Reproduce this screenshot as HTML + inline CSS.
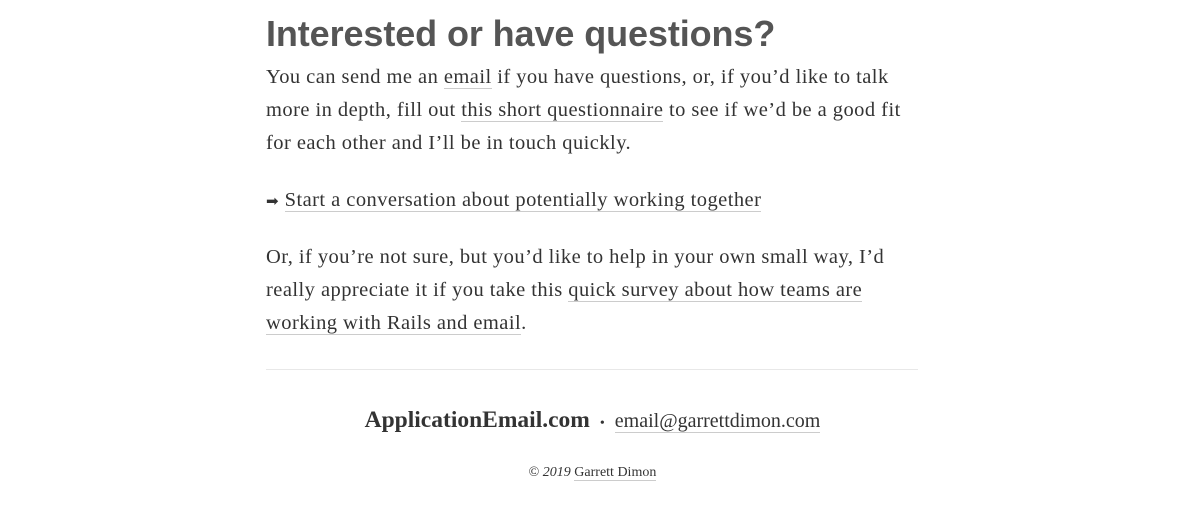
<!DOCTYPE html>
<html><head><style>
body{margin:0;background:#fff;font-family:"Liberation Serif",serif;color:#333;}
h1{position:absolute;left:266px;top:13px;margin:0;font-family:"Liberation Sans",sans-serif;font-weight:bold;font-size:36px;color:#555;letter-spacing:-0.1px;white-space:nowrap}
p{position:absolute;left:266px;margin:0;font-size:20.5px;line-height:33px;white-space:nowrap;color:#333;letter-spacing:0.45px}
a{color:#333;text-decoration:none;border-bottom:1px solid #ccc}
hr{position:absolute;left:266px;top:369px;width:652px;margin:0;border:0;border-top:1px solid #e8e8e8}
.f{position:absolute;left:0;width:1185px;text-align:center;white-space:nowrap}
</style></head><body>
<h1>Interested or have questions?</h1>
<p style="top:61px">You can send me an <a>email</a> if you have questions, or, if you’d like to talk<br>more in depth, fill out <a>this short questionnaire</a> to see if we’d be a good fit<br>for each other and I’ll be in touch quickly.</p>
<p style="top:184px"><span style="font-size:15px">➡</span> <a>Start a conversation about potentially working together</a></p>
<p style="top:241px">Or, if you’re not sure, but you’d like to help in your own small way, I’d<br>really appreciate it if you take this <a>quick survey about how teams are</a><br><a>working with Rails and email</a>.</p>
<hr>
<div class="f" style="top:407px;font-size:20px;color:#333"><b style="font-size:23.5px">ApplicationEmail.com</b> &nbsp;<span style="font-size:14px">•</span>&nbsp; <a>email@garrettdimon.com</a></div>
<div class="f" style="top:465px;font-size:14px;color:#333">© <i>2019</i> <a>Garrett Dimon</a></div>
</body></html>
